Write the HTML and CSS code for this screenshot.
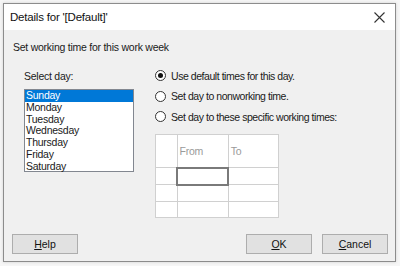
FILE: index.html
```html
<!DOCTYPE html>
<html lang="en">
<head>
    <meta charset="UTF-8">
    <title>Details for '[Default]'</title>
    <link rel="stylesheet" href="styles.css">
</head>
<body>

    <div class="window">
        <div class="titlebar">
            <span class="title">Details for '[Default]'</span>
            <svg class="close" width="11" height="11" viewBox="0 0 11 11">
                <path d="M0.5 0.5 L10.5 10.5 M10.5 0.5 L0.5 10.5" stroke="#333" stroke-width="1.1" fill="none"/>
            </svg>
        </div>

        <div class="content">
            <p class="intro">Set working time for this work week</p>

            <div class="columns">
                <div class="left">
                    <p class="label">Select day:</p>
                    <ul class="daylist">
                        <li class="selected">Sunday</li>
                        <li>Monday</li>
                        <li>Tuesday</li>
                        <li>Wednesday</li>
                        <li>Thursday</li>
                        <li>Friday</li>
                        <li>Saturday</li>
                    </ul>
                </div>

                <div class="right">
                    <div class="radio"><span class="dot checked"></span>Use default times for this day.</div>
                    <div class="radio"><span class="dot"></span>Set day to nonworking time.</div>
                    <div class="radio"><span class="dot"></span>Set day to these specific working times:</div>

                    <table class="times">
                        <tr class="head"><td class="num"></td><td>From</td><td>To</td></tr>
                        <tr><td class="num"></td><td class="focus"></td><td class="dotted"></td></tr>
                        <tr><td class="num"></td><td class="dotted"></td><td class="dotted"></td></tr>
                        <tr><td class="num"></td><td class="dotted"></td><td class="dotted"></td></tr>
                    </table>
                </div>
            </div>

            <div class="buttons">
                <button><u>H</u>elp</button>
                <div class="spacer"></div>
                <button><u>O</u>K</button>
                <button><u>C</u>ancel</button>
            </div>
        </div>
    </div>

</body>
</html>
```

FILE: styles.css
```css
body {
    margin: 0;
    background: #f6f6f6;
    font-family: "Liberation Sans", Arial, sans-serif;
    font-size: 10.5px;
    letter-spacing: -0.25px;
    color: #1a1a1a;
}

.window {
    margin: 3px;
    width: 393px;
    height: 259px;
    box-sizing: border-box;
    border: 1px solid #8c8c8c;
    background: #f0f0f0;
    display: flex;
    flex-direction: column;
    box-shadow: 0 0 3px rgba(0, 0, 0, 0.15);
}

.titlebar {
    height: 26px;
    background: white;
    display: flex;
    align-items: center;
    padding-left: 6px;
    padding-right: 10px;
}

.title {
    flex: 1;
    font-size: 11.5px;
    letter-spacing: -0.2px;
    color: #111;
}

.close {
    display: block;
}

.content {
    flex: 1;
    display: flex;
    flex-direction: column;
    padding: 11px 7px 7px 8px;
}

.intro {
    margin: 0 0 0 1px;
}

.columns {
    display: flex;
    margin-top: 16px;
}

.left {
    width: 131px;
    padding-left: 12px;
}

.label {
    margin: 1px 0 0 0;
}

.daylist {
    list-style: none;
    margin: 7px 0 0 0;
    padding: 0;
    width: 110px;
    height: 83px;
    box-sizing: border-box;
    border: 1px solid #828790;
    background: white;
}

.daylist li {
    height: 11.8px;
    line-height: 11.8px;
    padding-left: 1px;
}

.daylist .selected {
    background: #0078d7;
    color: white;
}

.right {
    display: flex;
    flex-direction: column;
    gap: 7.5px;
}

.radio {
    display: flex;
    align-items: center;
    height: 13px;
    letter-spacing: -0.45px;
}

.dot {
    width: 11px;
    height: 11px;
    box-sizing: border-box;
    border: 1px solid #333;
    border-radius: 50%;
    margin-right: 5px;
    display: flex;
    align-items: center;
    justify-content: center;
    background: white;
}

.dot.checked::after {
    content: "";
    width: 5px;
    height: 5px;
    border-radius: 50%;
    background: #111;
}

.times {
    margin-top: 3px;
    border-collapse: collapse;
    background: white;
    border: 1px solid #d0d0d0;
    width: 124px;
}

.times td {
    border: 1px solid #d0d0d0;
    height: 15px;
    padding: 0;
    width: 50px;
}

.times .num {
    width: 20px;
}

.times .head td {
    height: 32px;
    color: #9a9a9a;
    padding-left: 2px;
}

.times .focus {
    border: 2px solid #7a7a7a;
}

.times .dotted {
    border-top: 1px dotted #777;
    border-left: 1px dotted #777;
}

.buttons {
    margin-top: auto;
    display: flex;
    gap: 10px;
}

.spacer {
    flex: 1;
}

button {
    width: 66px;
    height: 20px;
    background: #e1e1e1;
    border: 1px solid #adadad;
    font-family: "Liberation Sans", Arial, sans-serif;
    font-size: 10.5px;
    color: #111;
    padding: 0;
}
```
